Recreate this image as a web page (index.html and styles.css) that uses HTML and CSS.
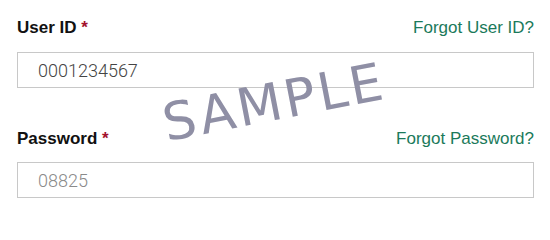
FILE: index.html
```html
<!DOCTYPE html>
<html>
<head>
<meta charset="utf-8">
<link rel="stylesheet" href="styles.css">
</head>
<body>
<form class="login">
  <div class="field field-user">
    <div class="label-row">
      <label class="label" for="uid">User ID <span class="req">*</span></label>
      <a class="link" href="#">Forgot User ID?</a>
    </div>
    <input class="input" id="uid" type="text" value="0001234567">
  </div>
  <div class="field field-pass">
    <div class="label-row">
      <label class="label" for="pwd">Password <span class="req">*</span></label>
      <a class="link" href="#">Forgot Password?</a>
    </div>
    <input class="input" id="pwd" type="text" placeholder="08825">
  </div>
  <div class="watermark">SAMPLE</div>
</form>
</body>
</html>
```

FILE: styles.css
```css
html, body {
  margin: 0;
  padding: 0;
  background: #ffffff;
}
.login {
  position: relative;
  width: 550px;
  height: 217px;
  box-sizing: border-box;
  padding: 18px 16px 0 17px;
  font-family: "Liberation Sans", Arial, sans-serif;
}
.field-pass {
  margin-top: 41px;
}
.label-row {
  display: flex;
  justify-content: space-between;
  align-items: baseline;
  height: 20px;
  line-height: 20px;
}
.field-user .label-row {
  margin-bottom: 14px;
}
.field-pass .label-row {
  margin-bottom: 13px;
}
.label {
  font-weight: bold;
  font-size: 17px;
  color: #111111;
}
.req {
  color: #a3122e;
  font-weight: bold;
}
.link {
  font-size: 17px;
  color: #1b7a5b;
  text-decoration: none;
}
.input {
  display: block;
  width: 100%;
  height: 36px;
  box-sizing: border-box;
  margin: 0;
  border: 1px solid #c8c8c8;
  border-radius: 0;
  padding: 0 0 0 20px;
  font-family: Roboto, "Liberation Sans", sans-serif;
  font-weight: 300;
  font-size: 18px;
  color: #444444;
  background: #ffffff;
  outline: none;
}
.input::placeholder {
  color: #8a8a8a;
  opacity: 1;
}
.watermark {
  position: absolute;
  left: 274px;
  top: 102px;
  transform: translate(-50%, -50%) rotate(-11deg);
  font-family: "DejaVu Sans", sans-serif;
  font-size: 52px;
  letter-spacing: 3px;
  color: #8f8fa5;
  line-height: 1;
  white-space: nowrap;
  pointer-events: none;
}
```
